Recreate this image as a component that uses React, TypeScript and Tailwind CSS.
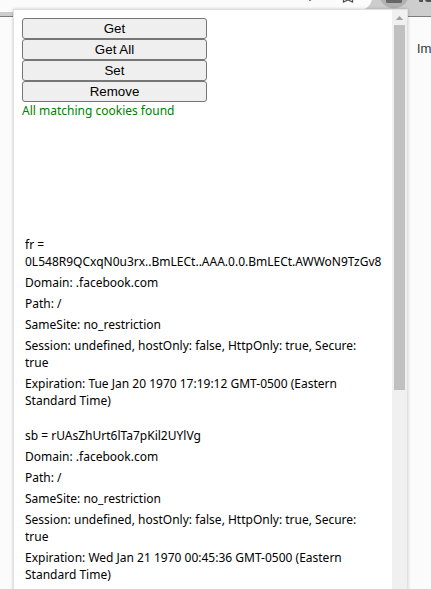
const actions = ["Get", "Get All", "Set", "Remove"];

const details = [
  "Domain: .facebook.com",
  "Path: /",
  "SameSite: no_restriction",
  "Session: undefined, hostOnly: false, HttpOnly: true, Secure: true",
];

const cookies = [
  {
    title: "fr = 0L548R9QCxqN0u3rx..BmLECt..AAA.0.0.BmLECt.AWWoN9TzGv8",
    expiration: "Expiration: Tue Jan 20 1970 17:19:12 GMT-0500 (Eastern Standard Time)",
  },
  {
    title: "sb = rUAsZhUrt6lTa7pKil2UYlVg",
    expiration: "Expiration: Wed Jan 21 1970 00:45:36 GMT-0500 (Eastern Standard Time)",
  },
];

function BrowserToolbar() {
  return (
    <header className="h-[17px] border-b border-[#7c7c7c] bg-[#cdcdcd]">
      <svg width="431" height="16" viewBox="0 0 431 16" className="block">
        <path d="M0 0H372Q370 6 365 9V12H0Z" fill="#fbfbfb" />
        <path d="M309 0h2.5l-1.2 1h-1.3Z" fill="#777" />
        <path d="M343.5 0v2l4.5-2 4.5 2V0" fill="none" stroke="#555" strokeWidth="1.3" />
        <path d="M380.5 0C383 5 388 8.3 394 8.3S405 5 407.5 0Z" fill="#b1b1b1" />
        <path d="M386 0h16v1.5q0 1.5-1.5 1.5h-13q-1.5 0-1.5-1.5Z" fill="#666" />
        <path d="M419 0h4v2h-3q-1 0-1-1ZM425 0h6v2h-4q-1 0-2-2Z" fill="#505050" />
      </svg>
    </header>
  );
}

function Scrollbar() {
  return (
    <div className="flex w-[15px] shrink-0 flex-col items-center bg-[#f0f0f0]">
      <svg width="15" height="15" viewBox="0 0 15 15" className="shrink-0">
        <path d="M3.8 10L7.5 6L11.2 10Z" fill="#a1a1a1" />
      </svg>
      <div className="h-[365px] w-[11px] bg-[#c0c0c0]" />
    </div>
  );
}

export default function App() {
  return (
    <div className="relative h-[589px] w-[431px] overflow-hidden bg-[#fbfbfb] font-['Noto_Sans',sans-serif] text-[12px] leading-[17px] text-black">
      <BrowserToolbar />
      <p className="ml-[417px] mt-[23px] whitespace-nowrap font-['Roboto',sans-serif] text-[12.5px] text-[#333]">Im</p>
      <div className="absolute left-[13px] top-[9px] flex h-[600px] w-[395px] border border-[#e0e0e0] bg-white shadow-[0_0_3px_rgba(0,0,0,0.2)]">
        <main className="flex min-w-0 flex-1 flex-col pl-2 pt-2">
          <div className="flex w-[185px] flex-col">
            {actions.map((action) => (
              <button
                key={action}
                className="h-[21px] rounded-[3px] border border-[#767676] bg-[#efefef] font-['Liberation_Sans',Arial,sans-serif] text-[13.333px] leading-[15px]"
              >
                {action}
              </button>
            ))}
          </div>
          <p className="text-[#008000]">All matching cookies found</p>
          <div className="mt-[117px] flex w-[361px] flex-col gap-[18px] pl-[3px]">
            {cookies.map((cookie) => (
              <section key={cookie.title} className="flex flex-col gap-1">
                <p>{cookie.title}</p>
                {details.map((line) => (
                  <p key={line} className="w-[340px]">{line}</p>
                ))}
                <p className="w-[340px]">{cookie.expiration}</p>
              </section>
            ))}
          </div>
        </main>
        <Scrollbar />
      </div>
    </div>
  );
}
